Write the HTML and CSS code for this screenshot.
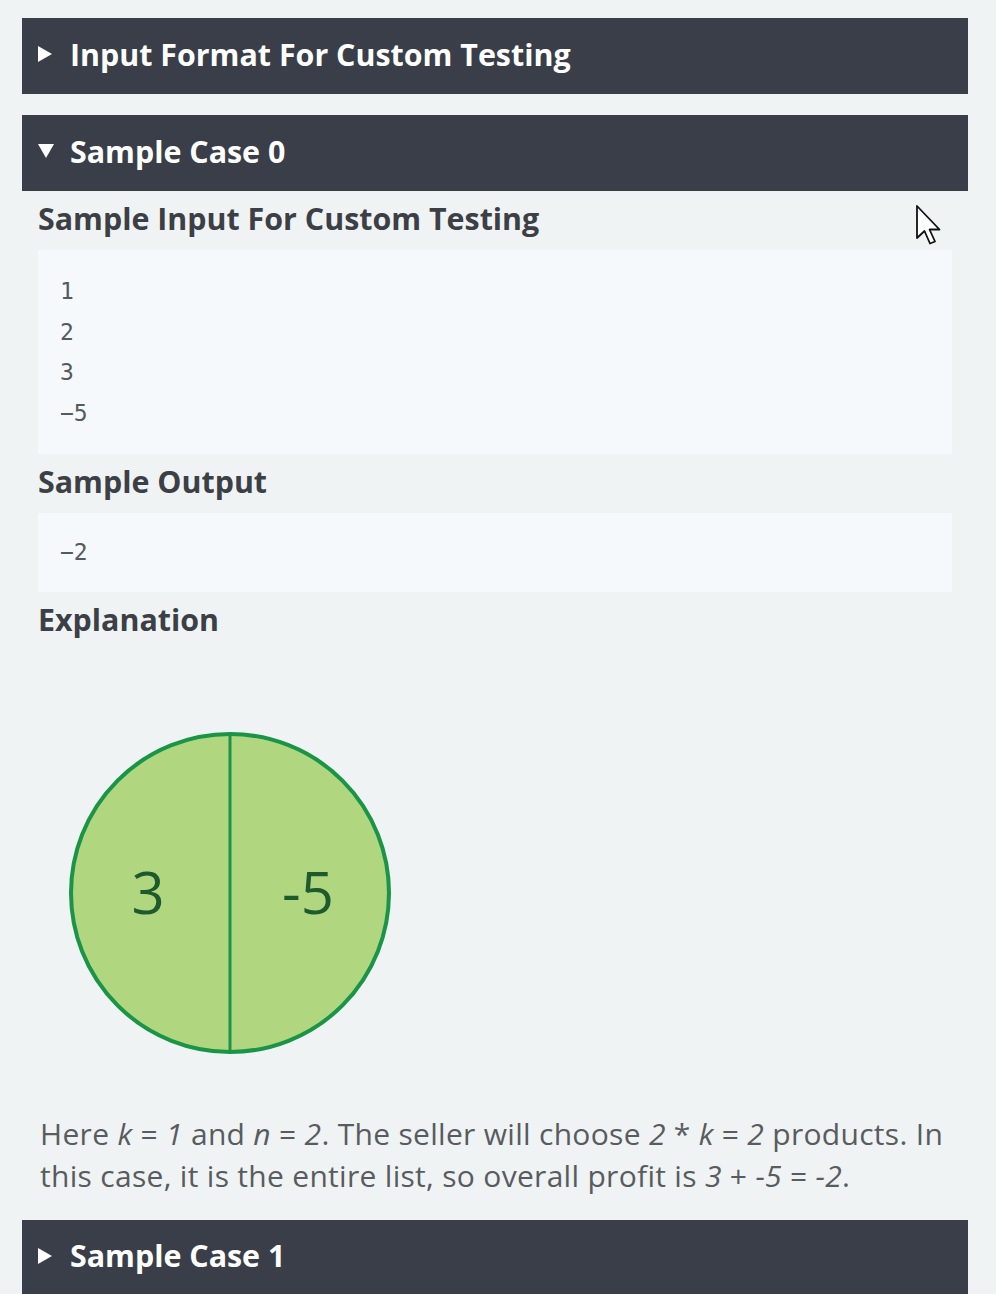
FILE: index.html
```html
<!DOCTYPE html>
<html>
<head>
<meta charset="utf-8">
<link rel="stylesheet" href="styles.css">
</head>
<body>
<div class="page">
  <div class="bar"><span class="tri right"></span>Input Format For Custom Testing</div>
  <div class="bar open"><span class="tri down"></span>Sample Case 0</div>
  <div class="case">
    <h3 class="h">Sample Input For Custom Testing</h3>
    <pre class="code in">1
2
3
−5</pre>
    <h3 class="h">Sample Output</h3>
    <pre class="code out">−2</pre>
    <h3 class="h">Explanation</h3>
    <div class="figure">
      <svg width="330" height="330" viewBox="0 0 330 330">
        <circle cx="165" cy="165" r="159" fill="#b0d77f" stroke="#1a9447" stroke-width="4"/>
        <line x1="165" y1="6" x2="165" y2="324" stroke="#1a9447" stroke-width="3"/>
        <text x="83" y="186" class="num" text-anchor="middle">3</text>
        <text x="243" y="186" class="num" text-anchor="middle">-5</text>
      </svg>
    </div>
    <p class="para">Here <i>k</i> = <i>1</i> and <i>n</i> = <i>2</i>. The seller will choose <i>2</i> * <i>k</i> = <i>2</i> products. In this case, it is the entire list, so overall profit is <i>3</i> + <i>-5</i> = <i>-2</i>.</p>
  </div>
  <div class="bar"><span class="tri right"></span>Sample Case 1</div>
</div>
<svg class="cursor" width="30" height="44" viewBox="0 0 30 44">
  <path d="M2 2 L2 34 L9.5 27 L15 39.5 L20 37.5 L14.5 25.5 L24.5 25.5 Z" fill="#ffffff" stroke="#111" stroke-width="1.8" stroke-linejoin="round"/>
</svg>
</body>
</html>
```
FILE: styles.css
```css
html, body {
  margin: 0;
  padding: 0;
  background: #f0f3f3;
}
.page {
  width: 946px;
  padding: 18px 0 0 22px;
  font-family: "Open Sans", "Liberation Sans", sans-serif;
  display: flex;
  flex-direction: column;
  gap: 21px;
}
.bar {
  height: 76px;
  background: #393e49;
  color: #ffffff;
  font-weight: 700;
  font-size: 30.4px;
  display: flex;
  align-items: center;
  padding-left: 16px;
  padding-bottom: 4px;
  box-sizing: border-box;
}
.bar.open { margin-bottom: -21px; }
.tri {
  display: inline-block;
  width: 0;
  height: 0;
  margin-right: 18px;
}
.tri.right {
  border-top: 8px solid transparent;
  border-bottom: 8px solid transparent;
  border-left: 14px solid #ffffff;
}
.tri.down {
  border-left: 8px solid transparent;
  border-right: 8px solid transparent;
  border-top: 14px solid #ffffff;
  margin-right: 16px;
}
.case {
  padding: 0 16px;
  display: flex;
  flex-direction: column;
}
.h {
  margin: 0;
  font-size: 30.4px;
  font-weight: 700;
  color: #3c3f45;
  height: 59px;
  line-height: 55px;
}
.code {
  margin: 0;
  background: #f6f9fb;
  font-family: "DejaVu Sans Mono", "Liberation Mono", monospace;
  font-size: 23px;
  line-height: 40.5px;
  color: #555a60;
  padding: 21px 22px 21px 22px;
}
.code.out { padding: 19px 22px 19px 22px; }
.figure {
  height: 462px;
  display: flex;
  align-items: center;
  padding-left: 27px;
  padding-top: 22px;
  box-sizing: border-box;
}
.num {
  font-family: "Open Sans", "Lato", sans-serif;
  font-weight: 500;
  font-size: 58px;
  fill: #1d5a2c;
}
.para {
  margin: 0 0 2px 2px;
  font-size: 30px;
  line-height: 42px;
  letter-spacing: 0.3px;
  color: #585c60;
}
.para i { font-style: italic; }
.cursor {
  position: absolute;
  left: 915px;
  top: 204px;
}
```
